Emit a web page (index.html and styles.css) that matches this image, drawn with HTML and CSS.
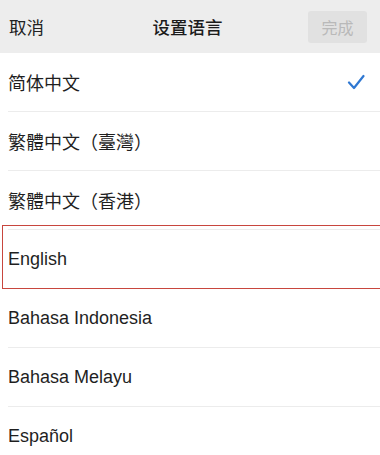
FILE: index.html
```html
<!DOCTYPE html>
<html lang="zh">
<head>
<meta charset="utf-8">
<title>设置语言</title>
<link rel="stylesheet" href="styles.css">
</head>
<body>
<header class="nav">
  <span class="nav-cancel">取消</span>
  <span class="nav-title">设置语言</span>
  <span class="nav-done-wrap"><span class="nav-done">完成</span></span>
</header>
<ul class="lang-list">
  <li class="lang-row"><span>简体中文</span>
    <svg class="check" width="18" height="16" viewBox="0 0 18 16"><path d="M2 8.5 L7 14 L16.5 2" fill="none" stroke="#2f78d2" stroke-width="2.2" stroke-linecap="round" stroke-linejoin="round"/></svg>
  </li>
  <li class="lang-row"><span>繁體中文（臺灣）</span></li>
  <li class="lang-row"><span>繁體中文（香港）</span></li>
  <li class="lang-row highlighted"><span>English</span><span class="mark"></span></li>
  <li class="lang-row"><span>Bahasa Indonesia</span></li>
  <li class="lang-row"><span>Bahasa Melayu</span></li>
  <li class="lang-row"><span>Español</span></li>
</ul>
</body>
</html>
```
FILE: styles.css
```css
html, body {
  margin: 0;
  padding: 0;
  background: #ffffff;
  overflow: hidden;
}
body {
  width: 380px;
  height: 455px;
  font-family: "Liberation Sans", "Noto Sans CJK SC", sans-serif;
  color: #1f1f1f;
}
.nav {
  height: 53px;
  background: #ededed;
  display: grid;
  grid-template-columns: 1fr auto 1fr;
  align-items: center;
  padding: 0 13px 0 9px;
  box-sizing: border-box;
}
.nav-cancel {
  font-family: "Noto Sans CJK SC", sans-serif;
  font-size: 17.5px;
  color: #222;
}
.nav-title {
  font-family: "Noto Sans CJK SC", sans-serif;
  font-size: 17.5px;
  font-weight: 500;
  color: #1c1c1c;
  padding-right: 1px;
}
.nav-done-wrap {
  display: flex;
  justify-content: flex-end;
}
.nav-done {
  width: 59px;
  height: 32px;
  border-radius: 3px;
  background: #e1e1e1;
  color: #b9b9b9;
  font-family: "Noto Sans CJK SC", sans-serif;
  font-size: 16px;
  display: flex;
  align-items: center;
  justify-content: center;
}
.lang-list {
  list-style: none;
  margin: 0;
  padding: 0;
}
.lang-row {
  height: 58px;
  margin-left: 8px;
  border-bottom: 1px solid #ececec;
  display: flex;
  align-items: center;
  justify-content: space-between;
  padding-right: 15px;
  font-size: 18px;
  position: relative;
}
.lang-row span {
  font-family: "Liberation Sans", "Noto Sans CJK SC", sans-serif;
}
.check {
  display: block;
}
.highlighted .mark {
  position: absolute;
  left: -6px;
  right: -4px;
  top: -5px;
  bottom: -1px;
  border: 1px solid #c8463e;
}
```
